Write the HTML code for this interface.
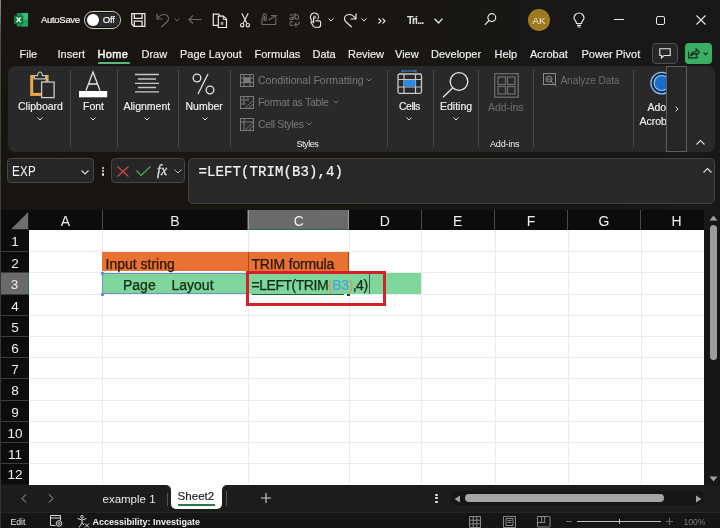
<!DOCTYPE html>
<html><head><meta charset="utf-8">
<style>
*{margin:0;padding:0;box-sizing:border-box}
html,body{width:720px;height:528px;overflow:hidden;background:linear-gradient(90deg,#18140f 0%,#191612 45%,#181818 100%);font-family:"Liberation Sans",sans-serif;color:#f2f2f2}
.a{position:absolute}
.t{position:absolute;white-space:nowrap;line-height:1}
svg{position:absolute;overflow:visible}
.tab{position:absolute;top:49px;font-size:11px;color:#f2f2f2;-webkit-text-stroke:0.15px #f2f2f2;white-space:nowrap;line-height:1}
.rl{position:absolute;font-size:10.5px;color:#f2f2f2;-webkit-text-stroke:0.15px currentColor;white-space:nowrap;line-height:1}
.sep{position:absolute;top:70px;width:1px;height:77px;background:#474747}
.ch{position:absolute}
.colh{position:absolute;top:210px;height:20.4px;background:#0c0c0c;color:#f0f0f0;font-size:14px;text-align:center;line-height:23px;border-right:1px solid #4a4a4a}
.rowh{position:absolute;left:1px;width:28px;background:#0c0c0c;color:#f0f0f0;font-size:13.5px;text-align:center;border-bottom:1px solid #3d3d3d}
.hg{position:absolute;left:29px;width:675.2px;height:1px;background:#ebebeb}
.vg{position:absolute;top:230px;width:1px;height:254px;background:#ebebeb}
</style></head><body><div style="position:absolute;left:0;top:0;width:720px;height:528px;will-change:transform">

<!-- window left border -->
<div class="a" style="left:0;top:0;width:1.2px;height:528px;background:linear-gradient(#8a8a8a,#4a4a4a 40px,#3a3a3a 200px,#333 528px)"></div>

<!-- ===== TITLE BAR ===== -->
<!-- Excel icon -->
<svg style="left:14.3px;top:13px" width="14" height="13.6" viewBox="0 0 14 13.6">
  <rect x="2.7" y="0" width="11.2" height="13.6" rx="0.8" fill="#1a8f52"/>
  <rect x="8.2" y="0" width="5.7" height="6.8" fill="#34c07a"/>
  <rect x="8.2" y="6.8" width="5.7" height="6.8" fill="#21a363"/>
  <rect x="0" y="2.6" width="9.3" height="8.3" rx="0.9" fill="#10783f"/>
  <path d="M2.6 4.4l4.1 4.7M6.7 4.4L2.6 9.1" stroke="#fff" stroke-width="1.4"/>
</svg>
<div class="t" style="left:41px;top:15.2px;font-size:9.5px;letter-spacing:-0.3px;color:#f2f2f2;-webkit-text-stroke:0.2px #f2f2f2">AutoSave</div>
<div class="a" style="left:84px;top:11px;width:37px;height:18px;border:1.3px solid #d0d0d0;border-radius:9px;background:#0c0c0c"></div>
<div class="a" style="left:85.8px;top:12.8px;width:33.4px;height:14.4px;border-radius:7.2px;background:#2a2a2a"></div>
<div class="a" style="left:86.6px;top:13.6px;width:12.6px;height:12.6px;border-radius:50%;background:#fff"></div>
<div class="t" style="left:102.8px;top:15.2px;font-size:9.6px;letter-spacing:-0.2px;color:#f2f2f2;-webkit-text-stroke:0.2px #f2f2f2">Off</div>

<!-- save -->
<svg style="left:131px;top:13px" width="15" height="14" viewBox="0 0 15 14" fill="none" stroke="#e6e6e6" stroke-width="1.3">
  <path d="M0.7 0.7h13.2v12.6H3l-2.3-2.3z"/><path d="M3.3 0.7v4.6h7.8V0.7"/><path d="M3.3 13.3V8.2h7.8v5.1"/>
</svg>
<!-- undo grey -->
<svg style="left:156px;top:12px" width="14" height="16" viewBox="0 0 14 16" fill="none" stroke="#6a6a6a" stroke-width="1.2">
  <path d="M1 1.5V7h5.5"/><path d="M1.3 6.8C3 4.3 4.5 2.5 7.5 2.5c3 0 5 2 5 4.3 0 1.5-.8 2.5-1.8 3.5L5.3 15"/>
</svg>
<svg style="left:174px;top:18px" width="6" height="4" viewBox="0 0 6 4" fill="none" stroke="#6a6a6a" stroke-width="1"><path d="M0.5 0.5l2.5 2.5 2.5-2.5"/></svg>
<!-- back arrow grey -->
<svg style="left:188px;top:15px" width="14" height="9" viewBox="0 0 14 9" fill="none" stroke="#6a6a6a" stroke-width="1.1"><path d="M13.5 4.5H1M5 0.5L1 4.5l4 4"/></svg>
<!-- copy -->
<svg style="left:212px;top:12.5px" width="16" height="15" viewBox="0 0 16 15" fill="none" stroke="#ebebeb" stroke-width="1.2">
  <path d="M6 12.3H1.3V1.2h5.3l1.6 1.6"/><path d="M6.3 3.2h5.2l3 3v8.3H6.3z"/><path d="M11.3 3.2v3.2h3.2" stroke-width="1"/><rect x="8.6" y="9" width="2.8" height="2.8" fill="#9a9a9a" stroke="none"/>
</svg>
<!-- scissors -->
<svg style="left:239.5px;top:13px" width="10" height="14.5" viewBox="0 0 10 14.5" fill="none" stroke="#ebebeb" stroke-width="1.1">
  <path d="M1.8 0.3L6.8 10.2M8.2 0.3L3.2 10.2"/><circle cx="2.2" cy="12.2" r="1.7"/><circle cx="7.8" cy="12.2" r="1.7"/>
</svg>
<!-- attach grey -->
<svg style="left:261px;top:12.5px" width="16" height="13" viewBox="0 0 16 13" fill="none" stroke="#6a6a6a" stroke-width="1.1">
  <path d="M1 5.5v6h13.8V2.5"/><path d="M7.5 7l7.3-4.5H10"/><path d="M2 7.5V2.5a1.6 1.6 0 0 1 3.2 0v4.3a0.8 0.8 0 0 1-1.6 0V3"/>
</svg>
<!-- abc grey -->
<svg style="left:288.5px;top:13px" width="14" height="14" viewBox="0 0 14 14" fill="none" stroke="#6a6a6a" stroke-width="1.1">
  <path d="M1 2.8c.3-1 1-1.3 1.7-1.3 1 0 1.6.5 1.6 1.5v3.5M4.3 4.2C2.5 4.2 0.8 4.5 0.8 5.6c0 .7.5 1.2 1.2 1.2 1 0 2.3-.7 2.3-2"/>
  <path d="M6 0v6.3M6 4a1.8 2.2 0 1 0 3.6 0a1.8 2.2 0 1 0-3.6 0"/>
  <path d="M3.8 9.3C3.4 8.8 3 8.6 2.4 8.6 1.4 8.6 0.8 9.4 0.8 10.6s.6 2 1.6 2c.6 0 1-.2 1.4-.7"/>
  <path d="M9.7 8.5c.6.6.7 1.5.1 2.3-.6.8-1.6 1-3.1 1M7.5 9.5L5.6 11.8l2 2"/>
</svg>
<!-- touch -->
<svg style="left:309.5px;top:13px" width="12" height="15" viewBox="0 0 12 15" fill="none" stroke="#ebebeb" stroke-width="1.1">
  <path d="M2 7.2A4 4 0 1 1 7.6 6.4"/><circle cx="4.6" cy="4.2" r="1.6" fill="#9a9a9a" stroke="none"/>
  <path d="M3.6 4.8v4.7L2.2 8.4c-.7-.5-1.6.2-1.1 1L3.2 13c.4.7 1 1.2 1.8 1.2h3.3c1.3 0 2.3-1 2.3-2.3V9.2c0-.8-.6-1.3-1.3-1.3H5.5"/>
</svg>
<svg style="left:328px;top:18px" width="6" height="4" viewBox="0 0 6 4" fill="none" stroke="#ebebeb" stroke-width="1"><path d="M0.5 0.5l2.5 2.5 2.5-2.5"/></svg>
<!-- redo -->
<svg style="left:343px;top:12px" width="14" height="16" viewBox="0 0 14 16" fill="none" stroke="#ebebeb" stroke-width="1.2">
  <path d="M13 1.5V7H7.5"/><path d="M12.7 6.8C11 4.3 9.5 2.5 6.5 2.5c-3 0-5 2-5 4.3 0 1.5.8 2.5 1.8 3.5L8.7 15"/>
</svg>
<svg style="left:361px;top:18px" width="6" height="4" viewBox="0 0 6 4" fill="none" stroke="#ebebeb" stroke-width="1"><path d="M0.5 0.5l2.5 2.5 2.5-2.5"/></svg>
<!-- >> -->
<svg style="left:378px;top:18px" width="8" height="6" viewBox="0 0 8 6" fill="none" stroke="#e6e6e6" stroke-width="1.1"><path d="M0.5 0.5L3 3 0.5 5.5M4.5 0.5L7 3 4.5 5.5"/></svg>
<div class="t" style="left:407px;top:15px;font-size:10.5px;font-weight:bold;letter-spacing:-0.9px;color:#e0e0e0">Tri...</div>
<svg style="left:434px;top:17.7px" width="9" height="6" viewBox="0 0 9 6" fill="none" stroke="#ebebeb" stroke-width="1.3"><path d="M0.5 0.6l4 4.4 4-4.4"/></svg>
<!-- search -->
<svg style="left:484px;top:13px" width="13" height="13" viewBox="0 0 13 13" fill="none" stroke="#e6e6e6" stroke-width="1.2"><circle cx="7.8" cy="4.6" r="3.9"/><path d="M5 7.5L0.8 11.8"/></svg>
<!-- AK -->
<div class="a" style="left:528px;top:9px;width:21.5px;height:21.5px;border-radius:50%;background:#9f7a20"></div>
<div class="t" style="left:531px;top:15.5px;font-size:9.6px;color:#f0ece0;width:16px;text-align:center">AK</div>
<!-- bulb -->
<svg style="left:573px;top:13px" width="12" height="15" viewBox="0 0 12 15" fill="none" stroke="#e6e6e6" stroke-width="1.2"><path d="M3.5 10.5C3.5 8 1 7 1 5a5 5 0 0 1 10 0c0 2-2.5 3-2.5 5.5z"/><path d="M4 12.3h4M4.5 14h3"/></svg>
<!-- window controls -->
<div class="a" style="left:614px;top:19px;width:9.5px;height:1.1px;background:#e6e6e6"></div>
<div class="a" style="left:655.5px;top:15.5px;width:9.2px;height:9.2px;border:1.2px solid #e6e6e6;border-radius:2px"></div>
<svg style="left:696px;top:15px" width="10" height="10" viewBox="0 0 10 10" fill="none" stroke="#e6e6e6" stroke-width="1.1"><path d="M0.5 0.5l9 9M9.5 0.5l-9 9"/></svg>

<!-- ===== TABS ===== -->
<div class="tab" style="left:19.5px">File</div>
<div class="tab" style="left:57.5px">Insert</div>
<div class="tab" style="left:97.5px;letter-spacing:0.35px;-webkit-text-stroke:0.5px #f2f2f2">Home</div>
<div class="a" style="left:97.5px;top:61.5px;width:32px;height:2px;border-radius:1px;background:#5cb77b"></div>
<div class="tab" style="left:141.5px">Draw</div>
<div class="tab" style="left:180px">Page Layout</div>
<div class="tab" style="left:254.5px">Formulas</div>
<div class="tab" style="left:312.5px">Data</div>
<div class="tab" style="left:348px">Review</div>
<div class="tab" style="left:395px">View</div>
<div class="tab" style="left:431px">Developer</div>
<div class="tab" style="left:494.5px">Help</div>
<div class="tab" style="left:530px">Acrobat</div>
<div class="tab" style="left:581.5px">Power Pivot</div>
<!-- comment btn -->
<div class="a" style="left:652px;top:43px;width:25.5px;height:21px;border:1px solid #4e4e4e;border-radius:4px;background:#262626"></div>
<svg style="left:659px;top:48px" width="12" height="11" viewBox="0 0 12 11" fill="none" stroke="#e6e6e6" stroke-width="1.1"><path d="M0.8 0.8h10.4v6.7H5L2.5 10V7.5H0.8z"/></svg>
<!-- share btn -->
<div class="a" style="left:685px;top:43px;width:26.5px;height:21px;border-radius:4px;background:#3aae62"></div>
<svg style="left:688px;top:48px" width="21" height="10.5" viewBox="0 0 21 10.5" fill="none" stroke="#0e2a17" stroke-width="1.15"><path d="M0.6 3.6v6.3h8.5V7.8"/><path d="M2.6 8.2c.3-2.8 2.3-4.7 5.6-4.7V1l3.2 3.2-3.2 3.2V5.4C5.6 5.4 3.8 6.3 2.6 8.2z"/><path d="M15.6 4.6l2 2 2-2"/></svg>

<!-- ===== RIBBON PANEL ===== -->
<div class="a" style="left:7.5px;top:65.7px;width:707px;height:86.1px;border-radius:7px;background:#29292a"></div>

<!-- clipboard icon -->
<svg style="left:29px;top:72px" width="26" height="27" viewBox="0 0 26 27" fill="none">
  <rect x="2.7" y="4.5" width="15.4" height="17.9" stroke="#eaa948" stroke-width="3"/>
  <path d="M5.3 6.9V3.6h3.3c0-2.2 1.5-3.6 2.4-3.6s2.4 1.4 2.4 3.6h3.3v3.3z" fill="#292929" stroke="#c0c0c0" stroke-width="1.2"/>
  <rect x="12.6" y="10" width="12.5" height="15.6" fill="#292929" stroke="#c8c8c8" stroke-width="1.3"/>
</svg>
<div class="rl" style="left:18px;top:101.3px">Clipboard</div>
<svg class="ch" style="left:37px;top:117.3px" width="6" height="4" viewBox="0 0 6 4" fill="none" stroke="#dcdcdc" stroke-width="1"><path d="M0.5 0.5l2.5 2.5 2.5-2.5"/></svg>
<div class="sep" style="left:69.5px"></div>

<!-- font icon -->
<svg style="left:79px;top:71px" width="29" height="27" viewBox="0 0 29 27" fill="none">
  <path d="M7 19.5L14 1l7 18.5M9.5 13h9" stroke="#e6e6e6" stroke-width="1.3"/>
  <rect x="0" y="20" width="28.2" height="6.3" fill="#ffffff"/>
</svg>
<div class="rl" style="left:83px;top:101.3px">Font</div>
<svg class="ch" style="left:89.5px;top:117.3px" width="6" height="4" viewBox="0 0 6 4" fill="none" stroke="#dcdcdc" stroke-width="1"><path d="M0.5 0.5l2.5 2.5 2.5-2.5"/></svg>
<div class="sep" style="left:116.5px"></div>

<!-- alignment -->
<svg style="left:135px;top:73px" width="24" height="20" viewBox="0 0 24 20" fill="none" stroke="#c8c8c8" stroke-width="1.3">
  <path d="M0 1.5h24M3 6h18M0 10.3h24M3 14.5h18M0 18.8h24"/>
</svg>
<div class="rl" style="left:123.5px;top:101.3px">Alignment</div>
<svg class="ch" style="left:143.5px;top:117.3px" width="6" height="4" viewBox="0 0 6 4" fill="none" stroke="#dcdcdc" stroke-width="1"><path d="M0.5 0.5l2.5 2.5 2.5-2.5"/></svg>
<div class="sep" style="left:177.5px"></div>

<!-- percent -->
<svg style="left:192px;top:73px" width="23" height="22" viewBox="0 0 23 22" fill="none" stroke="#e6e6e6" stroke-width="1.3">
  <circle cx="5" cy="5" r="3.8"/><circle cx="18" cy="17" r="3.8"/><path d="M16 1L6 21"/>
</svg>
<div class="rl" style="left:185.5px;top:101.3px">Number</div>
<svg class="ch" style="left:201.5px;top:117.3px" width="6" height="4" viewBox="0 0 6 4" fill="none" stroke="#dcdcdc" stroke-width="1"><path d="M0.5 0.5l2.5 2.5 2.5-2.5"/></svg>
<div class="sep" style="left:229.5px"></div>

<!-- styles -->
<svg style="left:240px;top:73.5px" width="14" height="13" viewBox="0 0 14 13" fill="none" stroke="#7a7a7a" stroke-width="1">
  <rect x="0.5" y="0.5" width="13" height="12"/><path d="M0.5 4h13M0.5 8.5h13M4 0.5v12M10 0.5v12"/><rect x="4" y="4" width="6" height="4.5" fill="#7a7a7a"/>
</svg>
<div class="t" style="left:258px;top:74.5px;font-size:10.5px;color:#7a7a7a">Conditional Formatting</div>
<svg style="left:366px;top:78px" width="6" height="4" viewBox="0 0 6 4" fill="none" stroke="#7a7a7a" stroke-width="1"><path d="M0.5 0.5l2.5 2.5 2.5-2.5"/></svg>
<svg style="left:240px;top:96px" width="14" height="13" viewBox="0 0 14 13" fill="none" stroke="#7a7a7a" stroke-width="1">
  <rect x="0.5" y="0.5" width="13" height="12"/><path d="M0.5 4h8M0.5 8h5M4 0.5v8M8 0.5v4M5 12.5l8-8M8.5 12.5l4.5-4.5"/>
</svg>
<div class="t" style="left:258px;top:97px;font-size:10.5px;letter-spacing:-0.3px;color:#7a7a7a">Format as Table</div>
<svg style="left:332.5px;top:100px" width="6" height="4" viewBox="0 0 6 4" fill="none" stroke="#7a7a7a" stroke-width="1"><path d="M0.5 0.5l2.5 2.5 2.5-2.5"/></svg>
<svg style="left:240px;top:118px" width="14" height="13" viewBox="0 0 14 13" fill="none" stroke="#7a7a7a" stroke-width="1">
  <rect x="0.5" y="0.5" width="13" height="12"/><path d="M0.5 4h13M4 0.5v12M5 12.5l8-8M8.5 12.5l4.5-4.5"/>
</svg>
<div class="t" style="left:258px;top:119px;font-size:10.5px;letter-spacing:-0.35px;color:#7a7a7a">Cell Styles</div>
<svg style="left:305.5px;top:122px" width="6" height="4" viewBox="0 0 6 4" fill="none" stroke="#7a7a7a" stroke-width="1"><path d="M0.5 0.5l2.5 2.5 2.5-2.5"/></svg>
<div class="t" style="left:296.5px;top:139.5px;font-size:9px;letter-spacing:-0.45px;color:#f0f0f0">Styles</div>
<div class="sep" style="left:386.5px"></div>

<!-- cells -->
<svg style="left:397px;top:70px" width="25" height="24" viewBox="0 0 25 24" fill="none">
  <path d="M5 1h14M5 0v2.5M19 0v2.5" stroke="#3a8ee6" stroke-width="1"/>
  <rect x="1" y="4" width="23.5" height="19.3" rx="1.5" stroke="#c8c8c8" stroke-width="1.3"/>
  <path d="M1 9.5h23.5M1 17h23.5M7 4v19.3M18.5 4v19.3" stroke="#c8c8c8" stroke-width="1.2"/>
  <rect x="7" y="10" width="11.5" height="6.5" fill="#2f8ae6"/>
</svg>
<div class="rl" style="left:399px;top:101.3px;letter-spacing:-0.5px">Cells</div>
<svg class="ch" style="left:406px;top:117.3px" width="6" height="4" viewBox="0 0 6 4" fill="none" stroke="#dcdcdc" stroke-width="1"><path d="M0.5 0.5l2.5 2.5 2.5-2.5"/></svg>
<div class="sep" style="left:432.5px"></div>

<!-- editing -->
<svg style="left:442px;top:71.5px" width="27" height="26" viewBox="0 0 27 26" fill="none" stroke="#e6e6e6" stroke-width="1.3">
  <circle cx="17" cy="9.5" r="8.8"/><path d="M10.8 15.7L1 25.3"/>
</svg>
<div class="rl" style="left:440px;top:101.3px">Editing</div>
<svg class="ch" style="left:453px;top:117.3px" width="6" height="4" viewBox="0 0 6 4" fill="none" stroke="#dcdcdc" stroke-width="1"><path d="M0.5 0.5l2.5 2.5 2.5-2.5"/></svg>
<div class="sep" style="left:478px"></div>

<!-- add-ins -->
<svg style="left:493.5px;top:73px" width="25" height="25" viewBox="0 0 25 25" fill="none" stroke="#6a6a6a" stroke-width="1.3">
  <rect x="0.7" y="0.7" width="23.5" height="23.5"/><rect x="4" y="4" width="7.5" height="7.5"/><rect x="13.5" y="4" width="7.5" height="7.5"/><rect x="4" y="13.5" width="7.5" height="7.5"/><rect x="13.5" y="13.5" width="7.5" height="7.5"/>
</svg>
<div class="rl" style="left:488px;top:102.3px;color:#6a6a6a">Add-ins</div>
<div class="t" style="left:490px;top:139.5px;font-size:9px;letter-spacing:-0.15px;color:#f0f0f0">Add-ins</div>
<div class="sep" style="left:532.5px"></div>

<!-- analyze -->
<svg style="left:542.5px;top:73px" width="14" height="14" viewBox="0 0 14 14" fill="none" stroke="#8a8a8a" stroke-width="1">
  <rect x="0.5" y="0.5" width="12" height="11"/><circle cx="6" cy="6" r="3"/><path d="M8 8l5 5.5"/><path d="M5 4.5v3M7 5v2.5"/>
</svg>
<div class="t" style="left:560.5px;top:76px;font-size:10px;letter-spacing:-0.05px;color:#6e6e6e">Analyze Data</div>
<div class="sep" style="left:633px"></div>

<!-- acrobat -->
<svg style="left:640px;top:64px" width="30" height="36" viewBox="0 0 30 36">
  <circle cx="21.7" cy="19.1" r="10.8" fill="#0c2744" stroke="#86bfea" stroke-width="1.3"/>
  <circle cx="21.7" cy="19.1" r="7.6" fill="#1a6ccc" stroke="#9fd0f4" stroke-width="1.1"/>
</svg>
<div class="rl" style="left:647.5px;top:102px">Ado</div>
<div class="rl" style="left:639.5px;top:115.5px">Acrob</div>
<div class="a" style="left:666px;top:66px;width:21px;height:86px;border:1px solid #5e5e5e;background:#262626"></div>
<svg style="left:675px;top:106px" width="4" height="6" viewBox="0 0 4 6" fill="none" stroke="#dcdcdc" stroke-width="1"><path d="M0.5 0.5L3 3 0.5 5.5"/></svg>
<svg style="left:695.5px;top:140px" width="9" height="5" viewBox="0 0 9 5" fill="none" stroke="#dcdcdc" stroke-width="1.1"><path d="M0.5 4.5l4-4 4 4"/></svg>

<!-- ===== FORMULA BAR ===== -->
<div class="a" style="left:7.2px;top:158.3px;width:86.8px;height:24.8px;border:1.2px solid #454545;border-radius:4px;background:#262626"></div>
<div class="t" style="left:11.8px;top:164.3px;font-size:14.5px;letter-spacing:0.3px;color:#f5f5f5;transform:scaleX(0.8);transform-origin:0 0">EXP</div>
<svg style="left:81px;top:169.5px" width="8" height="5" viewBox="0 0 8 5" fill="none" stroke="#dcdcdc" stroke-width="1.1"><path d="M0.5 0.5L4 4 7.5 0.5"/></svg>
<div class="a" style="left:101.7px;top:166.6px;width:2.4px;height:2.4px;border-radius:50%;background:#e6e6e6"></div>
<div class="a" style="left:101.7px;top:169.9px;width:2.4px;height:2.4px;border-radius:50%;background:#e6e6e6"></div>
<div class="a" style="left:101.7px;top:173.2px;width:2.4px;height:2.4px;border-radius:50%;background:#e6e6e6"></div>
<div class="a" style="left:111.1px;top:158.3px;width:73.8px;height:24.8px;border:1.2px solid #454545;border-radius:4px;background:#262626"></div>
<svg style="left:116.5px;top:166px" width="12" height="11" viewBox="0 0 12 11" fill="none" stroke="#d24c4c" stroke-width="1.15"><path d="M0.5 0.5l11 10M11.5 0.5l-11 10"/></svg>
<svg style="left:135.5px;top:166px" width="15" height="10" viewBox="0 0 15 10" fill="none" stroke="#52aa62" stroke-width="1.15"><path d="M0.5 4.5l4.5 5L14.5 0.5"/></svg>
<div class="t" style="left:157px;top:163.5px;font-size:14px;font-family:'Liberation Serif',serif;font-style:italic;color:#dcdcdc;-webkit-text-stroke:0.35px #dcdcdc">fx</div>
<svg style="left:174px;top:169px" width="8" height="5" viewBox="0 0 8 5" fill="none" stroke="#bdbdbd" stroke-width="1"><path d="M0.5 0.5L4 4 7.5 0.5"/></svg>
<div class="a" style="left:188px;top:158.2px;width:526.8px;height:45.8px;border:1.4px solid #424242;border-radius:5px;background:#282828"></div>
<div class="t" style="left:198.5px;top:165px;font-size:14px;font-family:'Liberation Mono',monospace;color:#f5f5f5;letter-spacing:0.1px;-webkit-text-stroke:0.2px #f5f5f5">=LEFT(TRIM(B3),4)</div>
<svg style="left:702.5px;top:167.5px" width="9" height="5" viewBox="0 0 9 5" fill="none" stroke="#dcdcdc" stroke-width="1.1"><path d="M0.5 4.5l4-4 4 4"/></svg>

<!-- ===== GRID ===== -->
<div class="a" style="left:29px;top:230.4px;width:675.2px;height:254.2px;background:#ffffff"></div>
<!-- corner -->
<div class="a" style="left:1px;top:210px;width:28px;height:20.4px;background:#0c0c0c"></div>
<svg style="left:10.8px;top:212.2px" width="17.2" height="17.2" viewBox="0 0 17.2 17.2"><path d="M17.2 0V17.2H0z" fill="#6e6e6e"/></svg>
<!-- column headers -->
<div class="colh" style="left:29px;width:73.6px">A</div>
<div class="colh" style="left:102.6px;width:145.7px">B</div>
<div class="colh" style="left:248.3px;width:100.8px;background:#6a6a6a;border-left:1px solid #9a9a9a;border-right:1.5px solid #9a9a9a;border-bottom:1.5px solid #2f6a46">C</div>
<div class="colh" style="left:349.1px;width:72.5px">D</div>
<div class="colh" style="left:421.6px;width:73.4px">E</div>
<div class="colh" style="left:495px;width:73px">F</div>
<div class="colh" style="left:568px;width:73px">G</div>
<div class="colh" style="left:641px;width:71px;border-right:none">H</div>

<!-- horizontal gridlines -->
<div class="hg" style="top:251.2px"></div>
<div class="hg" style="top:272.4px"></div>
<div class="hg" style="top:293.6px"></div>
<div class="hg" style="top:314.8px"></div>
<div class="hg" style="top:336.0px"></div>
<div class="hg" style="top:357.2px"></div>
<div class="hg" style="top:378.4px"></div>
<div class="hg" style="top:399.6px"></div>
<div class="hg" style="top:420.8px"></div>
<div class="hg" style="top:442.0px"></div>
<div class="hg" style="top:463.2px"></div>
<!-- vertical gridlines -->
<div class="vg" style="left:102.1px"></div>
<div class="vg" style="left:247.8px"></div>
<div class="vg" style="left:348.6px"></div>
<div class="vg" style="left:421.1px"></div>
<div class="vg" style="left:494.5px"></div>
<div class="vg" style="left:567.5px"></div>
<div class="vg" style="left:640.5px"></div>

<!-- row headers -->
<div class="rowh" style="top:230.4px;height:21.8px;line-height:23.6px">1</div>
<div class="rowh" style="top:252.2px;height:21.2px;line-height:23.0px">2</div>
<div class="rowh" style="top:273.4px;height:21.2px;line-height:23.0px;background:#6a6a6a;border-right:1.5px solid #2f6a46">3</div>
<div class="rowh" style="top:294.6px;height:21.2px;line-height:23.0px">4</div>
<div class="rowh" style="top:315.8px;height:21.2px;line-height:23.0px">5</div>
<div class="rowh" style="top:337.0px;height:21.2px;line-height:23.0px">6</div>
<div class="rowh" style="top:358.2px;height:21.2px;line-height:23.0px">7</div>
<div class="rowh" style="top:379.4px;height:21.2px;line-height:23.0px">8</div>
<div class="rowh" style="top:400.6px;height:21.2px;line-height:23.0px">9</div>
<div class="rowh" style="top:421.8px;height:21.2px;line-height:23.0px">10</div>
<div class="rowh" style="top:443.0px;height:21.2px;line-height:23.0px">11</div>
<div class="rowh" style="top:464.2px;height:20.3px;line-height:22.1px;border-bottom:none">12</div>

<!-- cells -->
<div class="a" style="left:102.3px;top:251.6px;width:246px;height:19.8px;background:#e97132"></div>
<div class="a" style="left:247.5px;top:251.6px;width:1px;height:19.8px;background:#a34e22"></div>
<div class="a" style="left:348px;top:251.6px;width:1px;height:19.8px;background:#a34e22"></div>
<div class="t" style="left:105.5px;top:256.5px;font-size:14px;color:#24140a;-webkit-text-stroke:0.25px #24140a">Input string</div>
<div class="t" style="left:251.5px;top:256.5px;font-size:14px;letter-spacing:-0.18px;color:#24140a;-webkit-text-stroke:0.25px #24140a">TRIM formula</div>
<div class="a" style="left:102.3px;top:272.8px;width:319px;height:21px;background:#7fd69c"></div>
<div class="a" style="left:102px;top:272.5px;width:146.5px;height:21.5px;border:1px solid #6b95c9"></div>
<div class="a" style="left:101px;top:271.5px;width:3px;height:3px;background:#6b95c9"></div>
<div class="a" style="left:101px;top:292.5px;width:3px;height:3px;background:#6b95c9"></div>
<div class="t" style="left:123px;top:277.5px;font-size:14px;color:#0d2a14;-webkit-text-stroke:0.25px #0d2a14">Page</div>
<div class="t" style="left:171.5px;top:277.5px;font-size:14px;color:#0d2a14;-webkit-text-stroke:0.25px #0d2a14">Layout</div>
<div class="t" style="left:251.5px;top:277.5px;font-size:14px;letter-spacing:-0.47px;color:#0d2a14;-webkit-text-stroke:0.25px #0d2a14">=LEFT(TRIM<span style="color:#e0915a;-webkit-text-stroke:0.15px #e0915a">(</span><span style="color:#4aa3d8;-webkit-text-stroke:0.15px #4aa3d8">B3</span><span style="color:#e0915a;-webkit-text-stroke:0.15px #e0915a">)</span>,4)</div>
<div class="a" style="left:252px;top:293.5px;width:92px;height:1.2px;background:#1e5a34"></div>
<div class="a" style="left:346.5px;top:294px;width:3px;height:2px;background:#1e3a2a"></div>
<div class="a" style="left:369px;top:273.5px;width:1.2px;height:20px;background:#3f5e47"></div>
<!-- red box -->
<div class="a" style="left:245.8px;top:271px;width:139.8px;height:34.5px;border:3px solid #d42129"></div>

<!-- vertical scrollbar -->
<div class="a" style="left:704.2px;top:210px;width:15.8px;height:274.5px;background:#171717"></div>
<svg style="left:709px;top:215px" width="9" height="6" viewBox="0 0 9 6"><path d="M4.5 0.5L8.5 5.5H0.5z" fill="#a0a0a0"/></svg>
<div class="a" style="left:709.5px;top:224.5px;width:7.5px;height:135.5px;border-radius:4px;background:#9d9d9d"></div>
<svg style="left:709px;top:476px" width="9" height="6" viewBox="0 0 9 6"><path d="M4.5 5.5L8.5 0.5H0.5z" fill="#a0a0a0"/></svg>

<!-- ===== SHEET TABS ===== -->
<div class="a" style="left:1px;top:484.5px;width:719px;height:27.5px;background:#1c1d1a"></div>
<svg style="left:20.5px;top:493.5px" width="6" height="9" viewBox="0 0 6 9" fill="none" stroke="#a8a8a8" stroke-width="1"><path d="M5 0.5L1 4.5 5 8.5"/></svg>
<svg style="left:48px;top:493.5px" width="6" height="9" viewBox="0 0 6 9" fill="none" stroke="#a8a8a8" stroke-width="1"><path d="M1 0.5L5 4.5 1 8.5"/></svg>
<div class="t" style="left:102.5px;top:494px;font-size:11.5px;color:#e8e8e8">example 1</div>
<div class="a" style="left:166.5px;top:491px;width:1px;height:15px;background:#555"></div>
<div class="a" style="left:164px;top:484px;width:65px;height:6px;background:#ffffff"></div>
<div class="a" style="left:150px;top:484.5px;width:20.6px;height:8px;background:#1c1d1a;border-radius:0 5px 0 0"></div>
<div class="a" style="left:222.2px;top:484.5px;width:20px;height:8px;background:#1c1d1a;border-radius:5px 0 0 0"></div>
<div class="a" style="left:170.6px;top:484px;width:51.6px;height:24.6px;background:#ffffff;border-radius:0 0 5px 5px"></div>
<div class="t" style="left:177.5px;top:490px;font-size:11.6px;color:#1a1a1a;-webkit-text-stroke:0.15px #1a1a1a">Sheet2</div>
<div class="a" style="left:177.8px;top:504.4px;width:37px;height:1.5px;background:#2a7650"></div>
<div class="a" style="left:225.5px;top:491px;width:1px;height:15px;background:#555"></div>
<svg style="left:260.5px;top:493px" width="10" height="10" viewBox="0 0 10 10" fill="none" stroke="#cfcfcf" stroke-width="1.1"><path d="M5 0v10M0 5h10"/></svg>
<div class="a" style="left:435.3px;top:493.6px;width:2.4px;height:2.4px;border-radius:50%;background:#e6e6e6"></div>
<div class="a" style="left:435.3px;top:497.1px;width:2.4px;height:2.4px;border-radius:50%;background:#e6e6e6"></div>
<div class="a" style="left:435.3px;top:500.6px;width:2.4px;height:2.4px;border-radius:50%;background:#e6e6e6"></div>
<div class="a" style="left:450px;top:491.3px;width:255px;height:13.5px;border-radius:7px;background:#161616"></div>
<svg style="left:454px;top:494.5px" width="7" height="8" viewBox="0 0 7 8"><path d="M0.5 4L6 0.5V7.5z" fill="#a0a0a0"/></svg>
<div class="a" style="left:464.5px;top:494px;width:199px;height:7.7px;border-radius:4px;background:#a5a5a5"></div>
<svg style="left:695px;top:494.5px" width="7" height="8" viewBox="0 0 7 8"><path d="M6.5 4L1 0.5V7.5z" fill="#a0a0a0"/></svg>

<!-- ===== STATUS BAR ===== -->
<div class="a" style="left:1px;top:512px;width:719px;height:16px;background:#151515;border-top:1px solid #262626"></div>
<div class="t" style="left:10.5px;top:517.5px;font-size:8.6px;color:#e8e8e8">Edit</div>
<svg style="left:50px;top:515px" width="13" height="12" viewBox="0 0 13 12" fill="none" stroke="#d8d8d8" stroke-width="1"><path d="M0.5 0.5h10v5M0.5 0.5v10h5M0.5 3h10"/><circle cx="9" cy="8.5" r="2.8"/><circle cx="9" cy="8.5" r="1"/></svg>
<svg style="left:77px;top:514.5px" width="13" height="13" viewBox="0 0 13 13" fill="none" stroke="#d8d8d8" stroke-width="1"><circle cx="5" cy="1.8" r="1.3"/><path d="M0.5 3.5L5 5l4.5-1.5M5 5v3l-3 4.5M5 8l2 2M8 8.5l4 4M12 8.5l-4 4"/></svg>
<div class="t" style="left:92.5px;top:518px;font-size:9px;font-weight:bold;color:#f0f0f0">Accessibility: Investigate</div>
<svg style="left:469px;top:515.5px" width="12" height="12" viewBox="0 0 12 12" fill="none" stroke="#8a8a8a" stroke-width="1"><path d="M0.5 0.5h11v11h-11zM0.5 4.2h11M0.5 7.8h11M4.2 0.5v11M7.8 0.5v11"/></svg>
<svg style="left:503px;top:515.5px" width="13" height="12" viewBox="0 0 13 12" fill="none" stroke="#8a8a8a" stroke-width="1"><path d="M0.5 0.5h12v11h-12z"/><path d="M3 2.5h7v7H3z"/><path d="M4.5 4.5h4M4.5 6.5h4"/></svg>
<svg style="left:537px;top:515.5px" width="13.5" height="11.5" viewBox="0 0 13.5 11.5" fill="none" stroke="#8a8a8a" stroke-width="1"><path d="M1 0.5h11.5a0.5 0.5 0 0 1 .5.5v9.5a0.5 0.5 0 0 1-.5.5H1a0.5 0.5 0 0 1-.5-.5V1A0.5 0.5 0 0 1 1 0.5zM4.7 0.5v6M7.7 0.5v6.5M0.5 6.5h7.2"/></svg>
<div class="a" style="left:566px;top:521px;width:6px;height:1px;background:#6a6a6a"></div>
<div class="a" style="left:577px;top:521px;width:84px;height:1.2px;background:#bdbdbd"></div>
<div class="a" style="left:618.5px;top:519px;width:1.3px;height:5px;background:#bdbdbd"></div>
<svg style="left:666px;top:517.5px" width="7" height="7" viewBox="0 0 7 7" fill="none" stroke="#6a6a6a" stroke-width="1"><path d="M3.5 0v7M0 3.5h7"/></svg>
<div class="t" style="left:683.5px;top:518px;font-size:8.6px;color:#7a7a7a">100%</div>

</div></body></html>
